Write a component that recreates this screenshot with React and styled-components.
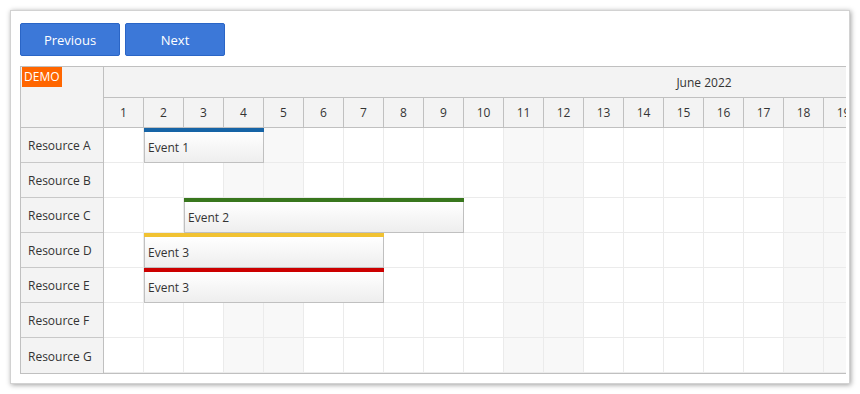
import React from 'react'
import styled, { createGlobalStyle } from 'styled-components'

const GlobalStyle = createGlobalStyle`
  body {
    margin: 0;
    background: #fff;
    font-family: "Open Sans", "Liberation Sans", sans-serif;
    color: #333;
  }
`

const Page = styled.div`
  padding: 10px;
`
const Card = styled.div`
  width: 840px;
  box-sizing: border-box;
  border: 1px solid #d2d2d2;
  box-shadow: 1px 1px 5px rgba(0, 0, 0, 0.38);
  padding: 12px 3px 9px 9px;
  background: #fff;
`
const Toolbar = styled.div`
  display: flex;
  gap: 5px;
  margin-bottom: 10px;
`
const Button = styled.button`
  width: 100px;
  height: 33px;
  padding: 0;
  background: #3c78d8;
  border: 1px solid #2a65c6;
  border-radius: 2px;
  color: #fff;
  font-family: "Open Sans", sans-serif;
  font-size: 13px;
  cursor: pointer;
`
const Scheduler = styled.div`
  display: flex;
  width: 826px;
  box-sizing: border-box;
  border: 1px solid #c0c0c0;
  border-right: none;
  font-size: 12px;
`
const RowHeaders = styled.div`
  width: 83px;
  flex-shrink: 0;
  border-right: 1px solid #c0c0c0;
  background: #f3f3f3;
  box-sizing: border-box;
`
const Corner = styled.div`
  position: relative;
  height: 61px;
  box-sizing: border-box;
  border-bottom: 1px solid #c0c0c0;
`
const Demo = styled.span`
  position: absolute;
  left: 1px;
  top: 0;
  background: #ff6600;
  color: #fff;
  font-size: 12px;
  line-height: 20px;
  padding: 0 2px;
`
const RowHeader = styled.div`
  height: 35px;
  box-sizing: border-box;
  border-bottom: 1px solid #c8c8c8;
  display: flex;
  align-items: center;
  padding: 1px 0 0 7px;
  &:last-child {
    border-bottom: none;
  }
`
const Timeline = styled.div`
  flex: 1;
  overflow: hidden;
`
const TimelineInner = styled.div`
  width: 1200px;
`
const MonthRow = styled.div`
  height: 31px;
  box-sizing: border-box;
  border-bottom: 1px solid #c0c0c0;
  background: #f3f3f3;
  text-align: center;
  line-height: 31px;
`
const DayRow = styled.div`
  display: flex;
`
const DayCell = styled.div`
  width: 40px;
  height: 30px;
  box-sizing: border-box;
  border-right: 1px solid #c0c0c0;
  border-bottom: 1px solid #c0c0c0;
  background: #f3f3f3;
  display: flex;
  align-items: center;
  justify-content: center;
`
const Grid = styled.div`
  position: relative;
`
const GridRow = styled.div`
  display: flex;
  &:last-child > div {
    border-bottom: none;
    height: 34px;
  }
`
const GridCell = styled.div`
  width: 40px;
  height: 35px;
  box-sizing: border-box;
  border-right: 1px solid #ebebeb;
  border-bottom: 1px solid #ebebeb;
  background: ${p => (p.$weekend ? '#f8f8f8' : '#fff')};
`
const Event = styled.div`
  position: absolute;
  height: 35px;
  display: flex;
  flex-direction: column;
`
const EventBar = styled.div`
  height: 4px;
  background: ${p => p.$color};
`
const EventBody = styled.div`
  flex: 1;
  box-sizing: border-box;
  border: 1px solid #c0c0c0;
  border-top: none;
  background: linear-gradient(to bottom, #ffffff 0%, #eeeeee 100%);
  display: flex;
  align-items: center;
  padding-left: 3px;
  color: #333;
`

const resources = ['A', 'B', 'C', 'D', 'E', 'F', 'G'].map(l => `Resource ${l}`)
const days = Array.from({ length: 30 }, (_, i) => i + 1)
const isWeekend = d => (d + 2) % 7 === 0 || (d + 2) % 7 === 6

const events = [
  { text: 'Event 1', row: 0, start: 2, end: 4, color: '#1664a6' },
  { text: 'Event 2', row: 2, start: 3, end: 9, color: '#38761d' },
  { text: 'Event 3', row: 3, start: 2, end: 7, color: '#f1c232' },
  { text: 'Event 3', row: 4, start: 2, end: 7, color: '#cc0000' }
]

export default function App() {
  return (
    <Page>
      <GlobalStyle />
      <Card>
        <Toolbar>
          <Button>Previous</Button>
          <Button>Next</Button>
        </Toolbar>
        <Scheduler>
          <RowHeaders>
            <Corner>
              <Demo>DEMO</Demo>
            </Corner>
            {resources.map(r => (
              <RowHeader key={r}>{r}</RowHeader>
            ))}
          </RowHeaders>
          <Timeline>
            <TimelineInner>
              <MonthRow>June 2022</MonthRow>
              <DayRow>
                {days.map(d => (
                  <DayCell key={d}>{d}</DayCell>
                ))}
              </DayRow>
              <Grid>
                {resources.map(r => (
                  <GridRow key={r}>
                    {days.map(d => (
                      <GridCell key={d} $weekend={isWeekend(d)} />
                    ))}
                  </GridRow>
                ))}
                {events.map((e, i) => (
                  <Event
                    key={i}
                    style={{
                      top: e.row * 35,
                      left: (e.start - 1) * 40,
                      width: (e.end - e.start + 1) * 40
                    }}
                  >
                    <EventBar $color={e.color} />
                    <EventBody>{e.text}</EventBody>
                  </Event>
                ))}
              </Grid>
            </TimelineInner>
          </Timeline>
        </Scheduler>
      </Card>
    </Page>
  )
}
